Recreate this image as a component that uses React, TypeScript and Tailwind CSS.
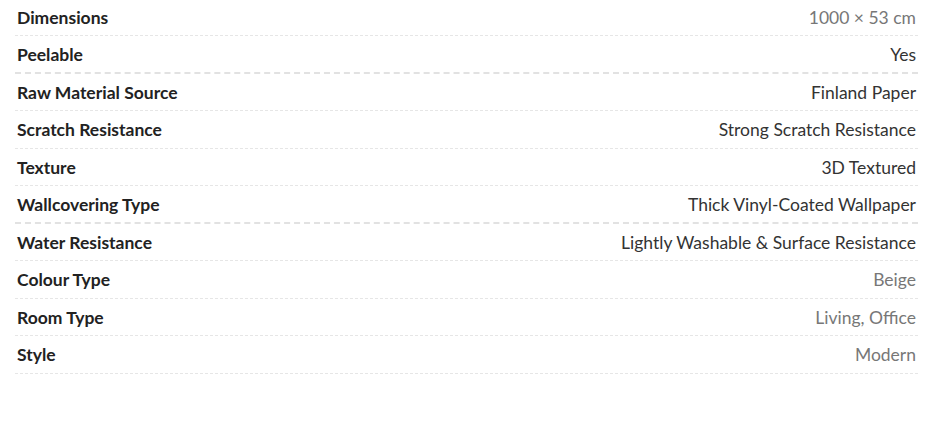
const specs = [
  { label: "Dimensions", value: "1000 × 53 cm", muted: true },
  { label: "Peelable", value: "Yes", thick: true },
  { label: "Raw Material Source", value: "Finland Paper" },
  { label: "Scratch Resistance", value: "Strong Scratch Resistance" },
  { label: "Texture", value: "3D Textured" },
  { label: "Wallcovering Type", value: "Thick Vinyl-Coated Wallpaper", thick: true },
  { label: "Water Resistance", value: "Lightly Washable & Surface Resistance" },
  { label: "Colour Type", value: "Beige", muted: true },
  { label: "Room Type", value: "Living, Office", muted: true },
  { label: "Style", value: "Modern", muted: true },
];

export default function App() {
  return (
    <div className="min-h-screen bg-white font-['Lato',sans-serif] text-[17.5px]">
      <ul className="-mt-[1.5px] pl-[15px] pr-[12px]">
        {specs.map((s) => (
          <li
            key={s.label}
            className={
              s.thick
                ? "flex h-[37.5px] items-center justify-between border-b-2 border-dashed border-[#e2e2e2] pl-[2px] pr-[2px] pt-[2px]"
                : "flex h-[37.5px] items-center justify-between border-b border-dashed border-[#e6e6e6] pl-[2px] pr-[2px] pt-[2px]"
            }
          >
            <span className="font-bold text-[#222]">{s.label}</span>
            <span className={s.muted ? "text-[#777]" : "text-[#333]"}>{s.value}</span>
          </li>
        ))}
      </ul>
    </div>
  );
}
